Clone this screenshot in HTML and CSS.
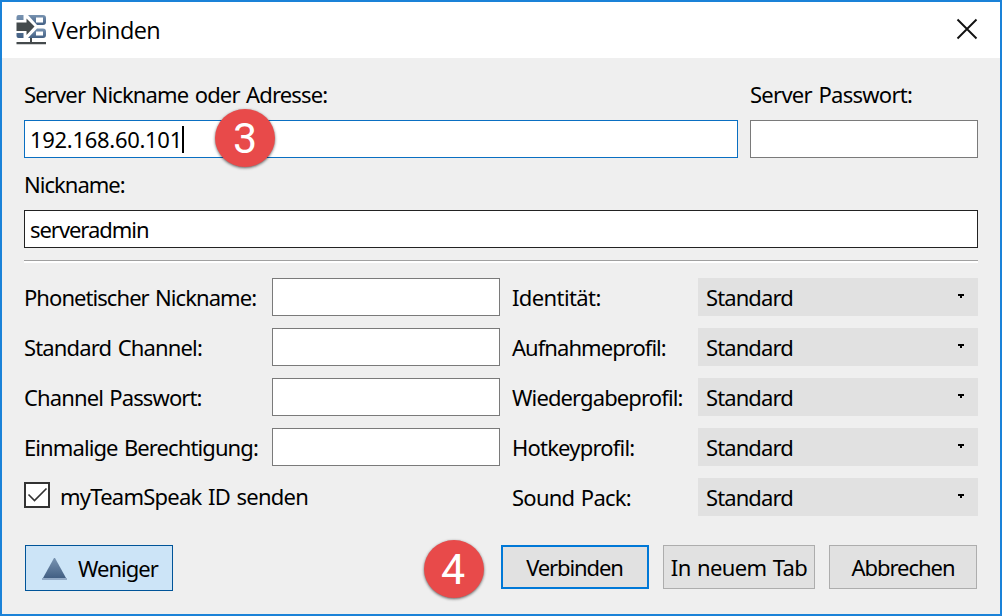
FILE: index.html
```
<!DOCTYPE html>
<html lang="de">
<head>
<meta charset="utf-8">
<title>Verbinden</title>
<link rel="stylesheet" href="styles.css">
</head>
<body>
<main class="window">
  <header class="titlebar">
    <svg class="app-icon" width="30" height="32" viewBox="0 0 30 32">
      <defs><linearGradient id="steel" x1="0" y1="0" x2="0" y2="1"><stop offset="0" stop-color="#7893b1"/><stop offset="1" stop-color="#425f83"/></linearGradient></defs>
      <path fill="url(#steel)" d="M2.500 1h5v5H.5V3q0-2 2-2zM.5 19h7v5h-5q-2 0-2-2z"/>
      <path fill="url(#steel)" fill-rule="evenodd" d="M12 1h15q3 0 3 3v4q0 3-3 3H21zM20 3.500v5h7v-5z"/>
      <path fill="url(#steel)" fill-rule="evenodd" d="M21 14.500h6q3 0 3 3V21q0 3-3 3H12zM20 17.500v4h7v-4z"/>
      <path fill="#444a4c" d="M.5 8.500h10V4.500L18.500 12.500l-8 8.500V17H.5zM14 24h2v4H30v2.200H.5V28H14z"/>
    </svg>
    <h1 class="title">Verbinden</h1>
    <svg class="close" width="20" height="20" viewBox="0 0 20 20"><path d="M.5.5l19 19M19.500.5l-19 19" stroke="#111" stroke-width="1.900"/></svg>
  </header>
  <form class="content">
    <div class="server-row">
      <label class="field"><span class="label t-server">Server Nickname oder Adresse:</span>
        <span class="input focused"><span class="t-ip">192.168.60.101</span><i class="caret"></i><b class="badge badge-three">3</b></span></label>
      <label class="field"><span class="label t-password">Server Passwort:</span><span class="input"></span></label>
    </div>
    <label class="field"><span class="label t-nick">Nickname:</span><span class="input dark"><span class="t-admin">serveradmin</span></span></label>
    <div class="divider"></div>
    <div class="options">
      <span class="label t-phonetic">Phonetischer Nickname:</span><span class="input"></span>
      <span class="label t-identity">Identität:</span><span class="combo">Standard<i class="arrow"></i></span>
      <span class="label t-channel">Standard Channel:</span><span class="input"></span>
      <span class="label t-record">Aufnahmeprofil:</span><span class="combo">Standard<i class="arrow"></i></span>
      <span class="label t-chpass">Channel Passwort:</span><span class="input"></span>
      <span class="label t-playback">Wiedergabeprofil:</span><span class="combo">Standard<i class="arrow"></i></span>
      <span class="label t-token">Einmalige Berechtigung:</span><span class="input"></span>
      <span class="label t-hotkey">Hotkeyprofil:</span><span class="combo">Standard<i class="arrow"></i></span>
      <span class="check-row"><span class="checkbox"><svg width="22" height="22" viewBox="0 0 22 22"><path d="M2.500 10.500l6 6L20.500 4.500" fill="none" stroke="#333" stroke-width="1.600"/></svg></span><span class="t-send">myTeamSpeak ID senden</span></span>
      <span class="label t-sound">Sound Pack:</span><span class="combo">Standard<i class="arrow"></i></span>
    </div>
    <footer class="actions">
      <span class="button less"><svg width="25" height="22" viewBox="0 0 25 22"><path d="M12 0h1l11 20H1z" fill="url(#steel)"/><path d="M0 20h25v2H0z" fill="#93abc7"/></svg><span class="t-less">Weniger</span></span>
      <b class="badge badge-four">4</b>
      <span class="button primary"><span class="t-connect">Verbinden</span></span>
      <span class="button tab"><span class="t-tab">In neuem Tab</span></span>
      <span class="button"><span class="t-cancel">Abbrechen</span></span>
    </footer>
  </form>
</main>
</body>
</html>
```
FILE: styles.css
```
* { box-sizing: border-box; }
body { margin: 0; font-family: "Noto Sans", sans-serif; font-size: 22px; line-height: 30px; color: #000; white-space: nowrap; word-spacing: 1.5px; }
.window { width: 1002px; height: 616px; border: 2px solid #1a82d8; background: #efefef; }
.titlebar { height: 56px; background: #fff; display: flex; align-items: center; padding: 0 23px 0 14px; }
.app-icon { display: block; margin-top: -1px; }
.title { margin: 0 0 0 6px; font: 400 23.5px/32px "Open Sans", sans-serif; letter-spacing: -.6px; }
.close { margin: -2px 0 0 auto; overflow: visible; }
.content { padding: 22px 22px 0; }
.field { display: block; }
.server-row { display: grid; grid-template-columns: 714px 228px; gap: 12px; height: 90px; }
.label { display: block; height: 40px; line-height: 29px; }
.input { display: flex; align-items: center; position: relative; height: 38px; border: 1px solid #7a7a7a; background: #fff; padding: 0 5px; }
.input.focused { border-color: #0a6fc2; }
.input.dark { border-color: #222; }
.caret { width: 2px; height: 27px; background: #000; margin-top: 1px; }
.badge { display: flex; align-items: center; justify-content: center; width: 60px; height: 58px; border-radius: 50%; background: #e84a4a; color: #fff; font: 400 43px/58px "Roboto", sans-serif; box-shadow: 0 1px 3px rgba(0,0,0,.6); }
.badge-three { position: absolute; left: 190px; top: -12px; }
.badge-four { margin: -5px 17px 0 auto; padding-right: 2px; }
.divider { height: 3px; margin-top: 12px; border-top: 1px solid #a0a0a0; background: #fff; }
.options { display: grid; grid-template-columns: 248px 228px 198px 280px; grid-auto-rows: 38px; row-gap: 12px; margin-top: 15px; }
.options .label { height: 38px; padding-top: 4px; line-height: 30px; }
.options .input + .label, .check-row + .label { padding-left: 12px; }
.combo { display: flex; align-items: center; height: 38px; padding: 0 14px 0 8px; background: #e1e1e1; letter-spacing: -.9px; }
.arrow { width: 6px; height: 4px; margin: -2px 0 0 auto; background: linear-gradient(#000, #000) center top / 6px 2px no-repeat, linear-gradient(#000, #000) center top / 2px 4px no-repeat; }
.check-row { grid-column: span 2; display: flex; align-items: flex-start; padding-top: 4px; gap: 10px; }
.check-row .t-send { margin-top: -1px; }
.checkbox { width: 26px; height: 26px; border: 2px solid #333; background: #fff; }
.checkbox svg { display: block; }
.actions { display: flex; align-items: flex-start; padding: 29px 1px 0; }
.button { display: flex; align-items: center; justify-content: center; width: 148px; height: 44px; margin-left: 14px; border: 1px solid #adadad; background: #e1e1e1; }
.button.less { height: 46px; margin-left: 0; padding-left: 16px; justify-content: flex-start; gap: 11px; border-color: #005499; background: #cce4f7; }
.button.less svg { margin-top: 2px; }
.button.primary { margin-left: 0; border: 2px solid #0078d7; }
.button.tab { width: 152px; }

.t-server { letter-spacing: -.85px; }
.t-password { letter-spacing: -.72px; }
.t-nick { letter-spacing: -.98px; }
.t-ip { letter-spacing: -.3px; }
.t-admin { letter-spacing: -1.05px; }
.t-phonetic { letter-spacing: -.94px; }
.t-channel { letter-spacing: -.84px; }
.t-chpass { letter-spacing: -.88px; }
.t-token { letter-spacing: -.9px; }
.t-identity { letter-spacing: -.6px; }
.t-record { letter-spacing: -.95px; }
.t-playback { letter-spacing: -.88px; }
.t-hotkey { letter-spacing: -.8px; }
.t-sound { letter-spacing: -.75px; }
.t-send { letter-spacing: -.76px; }
.t-less { letter-spacing: -1px; }
.t-connect { letter-spacing: -1.1px; margin-right: 1px; }
.t-tab { letter-spacing: -.68px; }
.t-cancel { letter-spacing: -1.05px; }
```
